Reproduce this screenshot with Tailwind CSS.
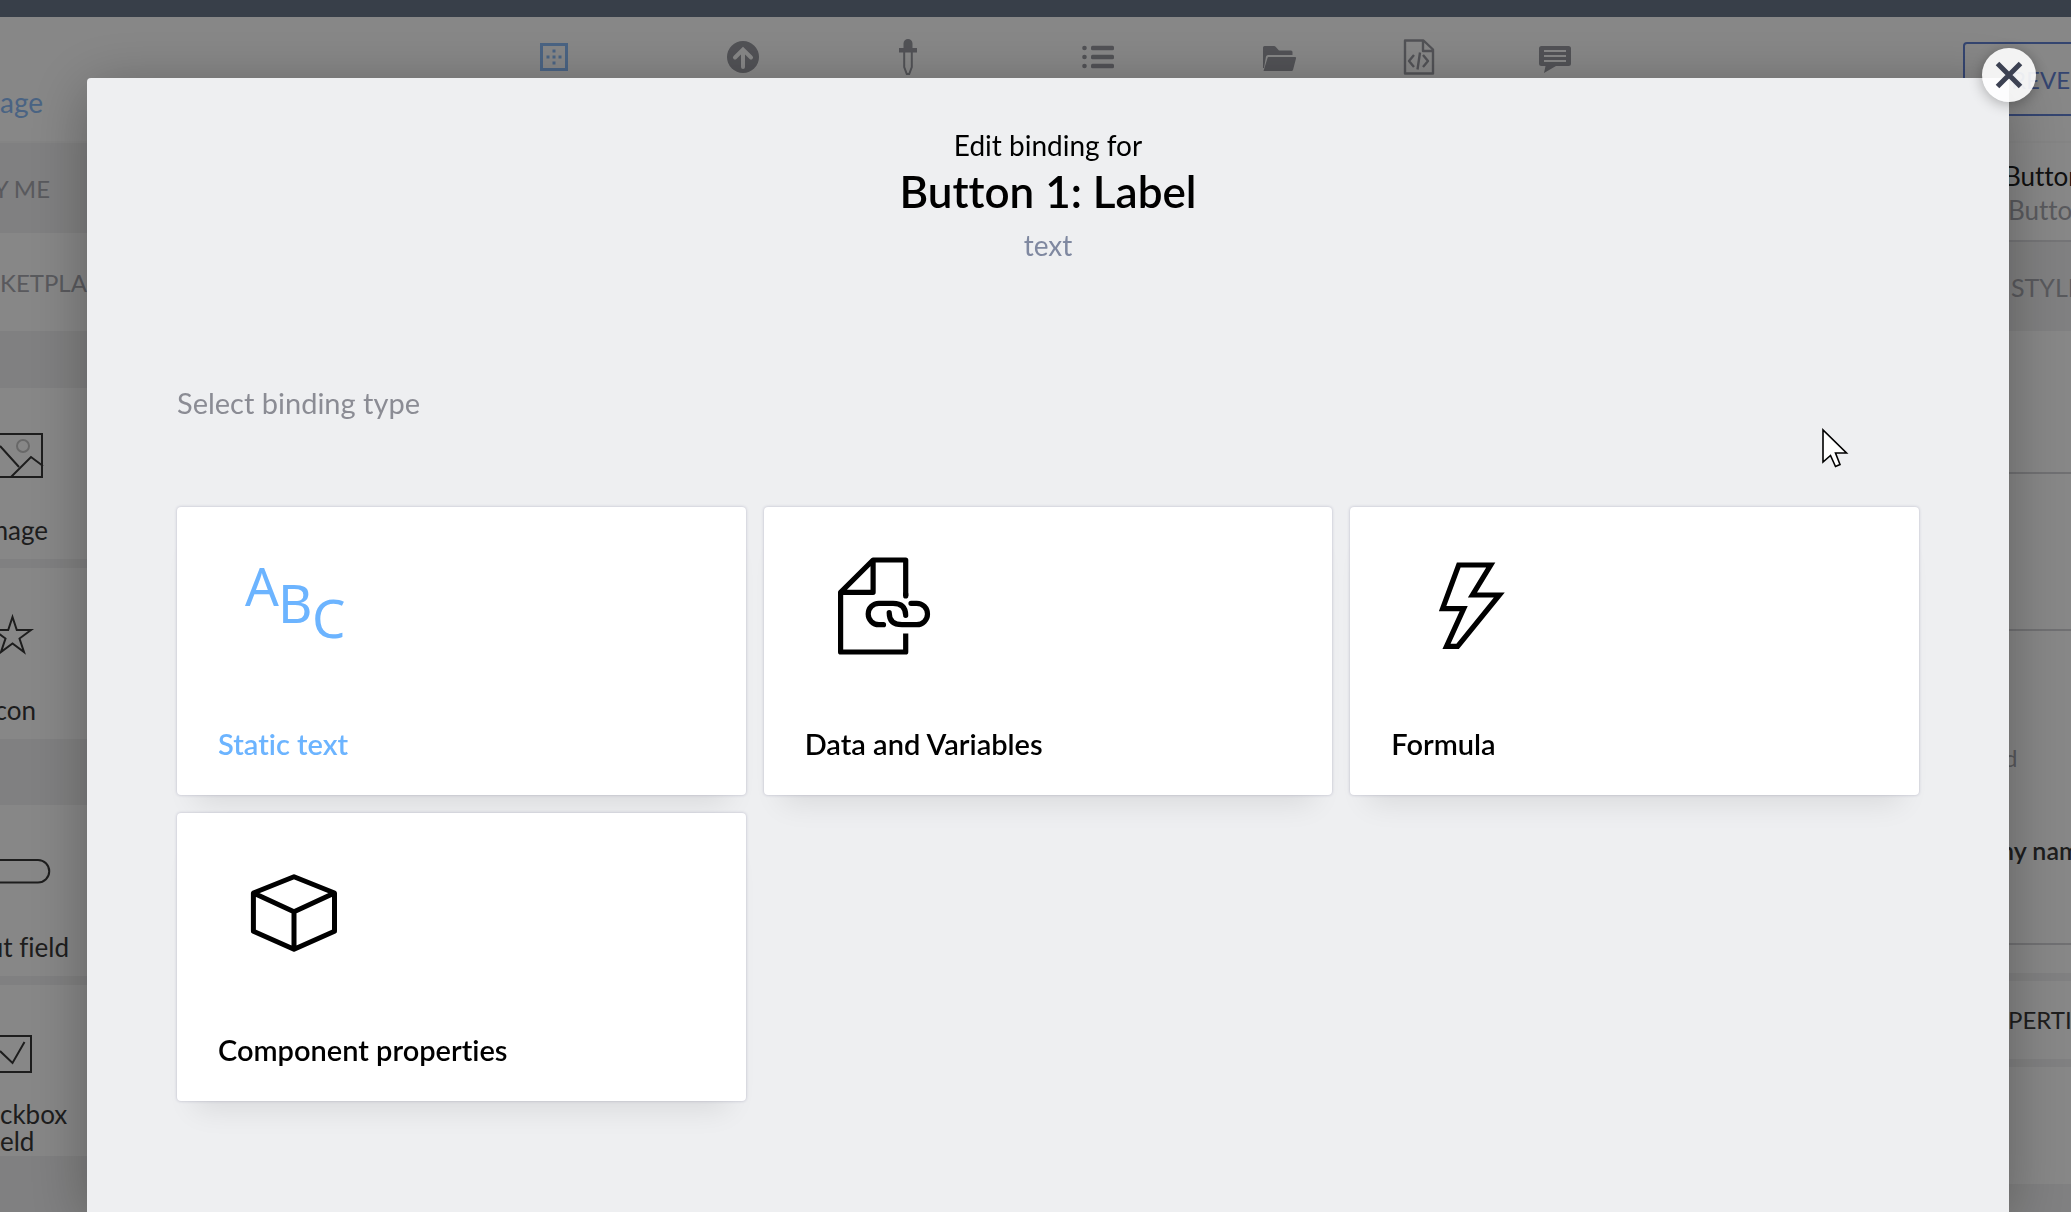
<!DOCTYPE html>
<html lang="en">
<head>
<meta charset="utf-8">
<meta name="viewport" content="width=device-width, initial-scale=1">
<title>Edit binding</title>
<script src="https://cdn.jsdelivr.net/npm/@tailwindcss/browser@4"></script>
</head>
<body class="h-screen overflow-hidden bg-white font-['Lato','Liberation_Sans',sans-serif] text-[26px] leading-[27px] text-[#383838] [font-variant-ligatures:none]">

<!-- Editor behind the dialog -->
<div class="flex h-full flex-col overflow-hidden">
  <div class="h-[17px] shrink-0 bg-[#383f49]"></div>
  <header class="flex h-[126px] shrink-0 items-start border-b-2 border-[#fafafa] bg-white">
    <a href="#" class="mt-[72px] w-[536px] text-[28px] text-[#8cbcf8]">age</a>
    <nav class="flex items-start pt-[22px] text-[#9a9ba2]">
      <button type="button" aria-label="Layout" class="text-[#8cbcf8]">
        <svg class="size-9" viewBox="0 0 36 36" fill="currentColor"><rect x="5.500" y="5.500" width="25" height="25" fill="none" stroke="currentColor" stroke-width="3"/><rect x="16.500" y="10.500" width="3" height="3"/><rect x="16.500" y="16.500" width="3" height="3"/><rect x="16.500" y="22.500" width="3" height="3"/><rect x="10.500" y="16.500" width="3" height="3"/><rect x="22.500" y="16.500" width="3" height="3"/></svg>
      </button>
      <button type="button" aria-label="Publish" class="ml-[153px]">
        <svg class="size-9" viewBox="0 0 36 36"><circle cx="18" cy="18" r="16" fill="currentColor"/><path d="M18 28V12M10 18.500l8-8 8 8" fill="none" stroke="#fff" stroke-width="4" stroke-linecap="round"/></svg>
      </button>
      <button type="button" aria-label="Theme" class="ml-[129px]">
        <svg class="size-9" viewBox="0 0 36 36" fill="currentColor"><path d="M13.500 9V4.500a4.500 4.500 0 0 1 9 0V9H27v4.500H9V9z"/><path d="M14.200 13v15l2.600 7h2.400l2.600-7V13" fill="none" stroke="currentColor" stroke-width="2"/></svg>
      </button>
      <button type="button" aria-label="List" class="ml-[154px]">
        <svg class="size-9" viewBox="0 0 36 36" fill="currentColor"><circle cx="4.500" cy="9" r="2.300"/><circle cx="4.500" cy="18" r="2.300"/><circle cx="4.500" cy="27" r="2.300"/><rect x="11" y="6.700" width="23" height="4.600" rx="1.500"/><rect x="11" y="15.700" width="23" height="4.600" rx="1.500"/><rect x="11" y="24.700" width="23" height="4.600" rx="1.500"/></svg>
      </button>
      <button type="button" aria-label="Files" class="ml-[146px]">
        <svg class="size-9" viewBox="0 0 36 36" fill="currentColor"><path d="M1 29V8.500Q1 7 2.500 7H12q1 0 1.600.800L17 11.500h12q1.500 0 1.500 1.500v3H6q-1.500 0-2 1.500L2 29z"/><path d="M6.500 18H33q1.500 0 1 1.500l-3 11.500q-.3 1-1.500 1H1.500l4-13q.2-1 1-1z"/></svg>
      </button>
      <button type="button" aria-label="Code" class="ml-[103px]">
        <svg class="size-9" viewBox="0 0 36 36" fill="none" stroke="currentColor" stroke-width="2.400" stroke-linejoin="round"><path d="M4 1.500h18.500l9.500 9V34.500H4zM22 1.500V12h10"/><path d="M13 16l-5 6 5 6M22 16l5 6-5 6M19 13.500l-2.500 17"/></svg>
      </button>
      <button type="button" aria-label="Comments" class="ml-[100px]">
        <svg class="size-9" viewBox="0 0 36 36"><path d="M4.500 7h27q2.500 0 2.500 2.500v15q0 2.500-2.500 2.500H19L7 34l1.500-7h-4Q2 27 2 24.500v-15Q2 7 4.500 7z" fill="currentColor"/><path d="M7 12h22M7 17h22M7 22h22" stroke="#fff" stroke-width="1.800"/></svg>
      </button>
    </nav>
    <button type="button" class="ml-auto mt-[25px] -mr-[60px] flex h-[74px] w-[168px] shrink-0 items-center rounded border-2 border-[#6382d4] pl-[46px] text-[24px] text-[#6382d4]">REVERT</button>
  </header>

  <div class="flex min-h-0 flex-1 justify-between">
    <aside class="flex w-[87px] shrink-0 flex-col overflow-hidden whitespace-nowrap bg-[#f2f2f3]">
      <a href="#" class="flex h-[90px] w-[50px] shrink-0 items-center justify-end text-[24px] text-[#a8a9b0]">Y ME</a>
      <a href="#" class="flex h-[98px] shrink-0 items-center bg-white text-[24px] text-[#a8a9b0]">KETPLACE</a>
      <div class="mt-[57px] flex shrink-0 flex-col gap-[9px]">
        <div class="bg-white">
          <svg class="h-[118px] w-[87px]" viewBox="0 0 87 118" fill="none" stroke="currentColor" stroke-width="2"><path d="M-10 46H42V89H-10M0 58l19 21M11 89l20-20 12 9"/><circle cx="23" cy="58" r="6" stroke="#c4c4c4"/></svg>
          <div class="flex h-[53px] w-12 items-center justify-end pb-1">mage</div>
        </div>
        <div class="bg-white">
          <svg class="h-[118px] w-[87px]" viewBox="0 0 87 118" fill="none" stroke="currentColor" stroke-width="2"><path d="M12.500 49l4.300 13H31l-11.500 8.500 4.500 13.500-11.500-8.500L1 84l4.500-13.500L-6 62H8.200z"/></svg>
          <div class="flex h-[53px] w-9 items-center justify-end pb-1">con</div>
        </div>
      </div>
      <div class="mt-[66px] flex shrink-0 flex-col gap-[9px]">
        <div class="bg-white">
          <svg class="h-[118px] w-[87px]" viewBox="0 0 87 118" fill="none" stroke="currentColor" stroke-width="2"><path d="M-10 55H38a11 11 0 0 1 0 22.500H-10"/></svg>
          <div class="flex h-[53px] w-[69px] items-center justify-end pb-1">ut field</div>
        </div>
        <div class="bg-white">
          <svg class="h-[118px] w-[87px]" viewBox="0 0 87 118" fill="none" stroke="currentColor" stroke-width="2"><path d="M-10 51H31V87H-10M0 66l12.500 12L24.500 57"/></svg>
          <div class="flex h-[53px] items-center pb-1">ckbox<br>eld</div>
        </div>
      </div>
    </aside>

    <aside class="flex w-[67px] shrink-0 flex-col overflow-hidden whitespace-nowrap bg-[#f2f2f3]">
      <div class="h-[99px] shrink-0 border-b-2 border-[#dcdce0] bg-white pt-4 leading-[34px]">
        <div class="text-[#202020]">Button 1</div>
        <div class="pl-1 text-[#a8a9b0]">Button</div>
      </div>
      <a href="#" class="flex h-[89px] shrink-0 items-center pt-0.5 pl-[7px] text-[25px] text-[#a8a9b0]">STYLE</a>
      <div class="h-[143px] shrink-0 border-b-2 border-[#d4d4d8] bg-white"></div>
      <div class="h-[157px] shrink-0 border-b-2 border-[#d4d4d8] bg-white"></div>
      <div class="flex h-[314px] shrink-0 flex-col gap-[66px] border-b-2 border-[#d4d4d8] bg-white pt-[113px]">
        <span class="text-[24px] text-[#a8a9b0]">d</span>
        <span class="-ml-1 text-[25px] font-semibold">ny name</span>
      </div>
      <div class="h-[28px] shrink-0 bg-white"></div>
      <div class="my-2 flex h-[78px] shrink-0 items-center bg-white pb-0.5 pl-1 text-[24px]">PERTIES</div>
      <div class="h-[117px] shrink-0 bg-white"></div>
    </aside>
  </div>
</div>

<!-- Dialog -->
<div class="fixed inset-0 top-[17px] flex bg-black/47 pt-[61px] pr-[62px] pl-[87px]">
  <section role="dialog" aria-labelledby="dialog-title" class="relative flex-1 rounded-t bg-[#eeeff1] px-[90px] pt-[51px] shadow-[0_10px_60px_rgba(0,0,0,0.3)]">
    <button type="button" aria-label="Close" class="absolute -top-[30px] -right-[27px] flex size-[54px] items-center justify-center rounded-full bg-white/90 shadow-[0_2px_14px_rgba(0,0,0,0.3)]">
      <svg class="size-7" viewBox="0 0 28 28" fill="none" stroke="#3c4152" stroke-width="5"><path d="M2.500 2.500l23 23M25.500 2.500l-23 23"/></svg>
    </button>

    <header class="text-center text-black">
      <p class="text-[28px] leading-8">Edit binding for</p>
      <h1 id="dialog-title" class="text-[44px] leading-[60px] font-semibold">Button 1: Label</h1>
      <p class="mt-2 text-[28px] leading-8 text-[#7f88a0]">text</p>
    </header>

    <h2 class="mt-[126px] text-[29px] leading-8 text-[#8b8c94]">Select binding type</h2>

    <div class="mt-[88px] grid grid-cols-3 gap-[18px] text-[29px] leading-8 font-semibold text-black">
      <button type="button" class="flex h-72 flex-col items-start justify-between rounded bg-white px-[41px] pt-10 pb-[35px] text-[#6cb4ff] shadow-[0_0_3px_rgba(60,60,110,0.3),0_26px_28px_-18px_rgba(0,0,0,0.09)]">
        <svg class="h-28 w-32 font-['Noto_Sans',sans-serif] text-[53px] font-normal" viewBox="0 0 128 112" fill="currentColor"><text x="27" y="59">A</text><text x="60" y="76">B</text><text x="94" y="91">C</text></svg>
        Static text
      </button>
      <button type="button" class="flex h-72 flex-col items-start justify-between rounded bg-white px-[41px] pt-10 pb-[35px] shadow-[0_0_3px_rgba(60,60,110,0.3),0_26px_28px_-18px_rgba(0,0,0,0.09)]">
        <svg class="h-28 w-32" viewBox="0 0 128 112" fill="none" stroke="currentColor" stroke-width="5.200" stroke-linejoin="round"><path d="M100.700 49V13H68.100L35.600 45.300V105H100.700V86.500M68.100 13V45.300H35.600"/><path stroke-linecap="round" d="M100.700 47V49"/><path stroke-linecap="round" d="M78.500 77.700H73.900a10.700 10.700 0 0 1 0-21.400H88q12.700 0 12.700 12M106 56.300h5.800a10.700 10.700 0 0 1 0 21.400H97q-12.800 0-12.800-12"/></svg>
        Data and Variables
      </button>
      <button type="button" class="flex h-72 flex-col items-start justify-between rounded bg-white px-[41px] pt-10 pb-[35px] shadow-[0_0_3px_rgba(60,60,110,0.3),0_26px_28px_-18px_rgba(0,0,0,0.09)]">
        <svg class="h-28 w-32" viewBox="0 0 128 112" fill="none" stroke="currentColor" stroke-width="5.200"><path d="M67.700 18H99.700L81.500 48H108.300L66.600 99.300H55.500L72.700 61.700H51.600z"/></svg>
        Formula
      </button>
      <button type="button" class="flex h-72 flex-col items-start justify-between rounded bg-white px-[41px] pt-10 pb-[35px] shadow-[0_0_3px_rgba(60,60,110,0.3),0_26px_28px_-18px_rgba(0,0,0,0.09)]">
        <svg class="h-28 w-32" viewBox="0 0 128 112" fill="none" stroke="currentColor" stroke-width="5" stroke-linejoin="round"><path d="M76 23.700L116.500 40V78.300L76 96.300 35.400 78.300V40zM35.400 40L76 58.700 116.500 40M76 58.700V96.300"/></svg>
        Component properties
      </button>
    </div>

    <!-- Mouse pointer -->
    <svg class="absolute top-[350px] right-[160px] h-[40px] w-[27px]" viewBox="0 0 27 40" fill="#fff" stroke="#000" stroke-width="1.600"><path d="M1 2V34L8.500 27.500 13.500 38.500 18 36.500 13.500 25H24.500z"/></svg>
  </section>
</div>
</body>
</html>
